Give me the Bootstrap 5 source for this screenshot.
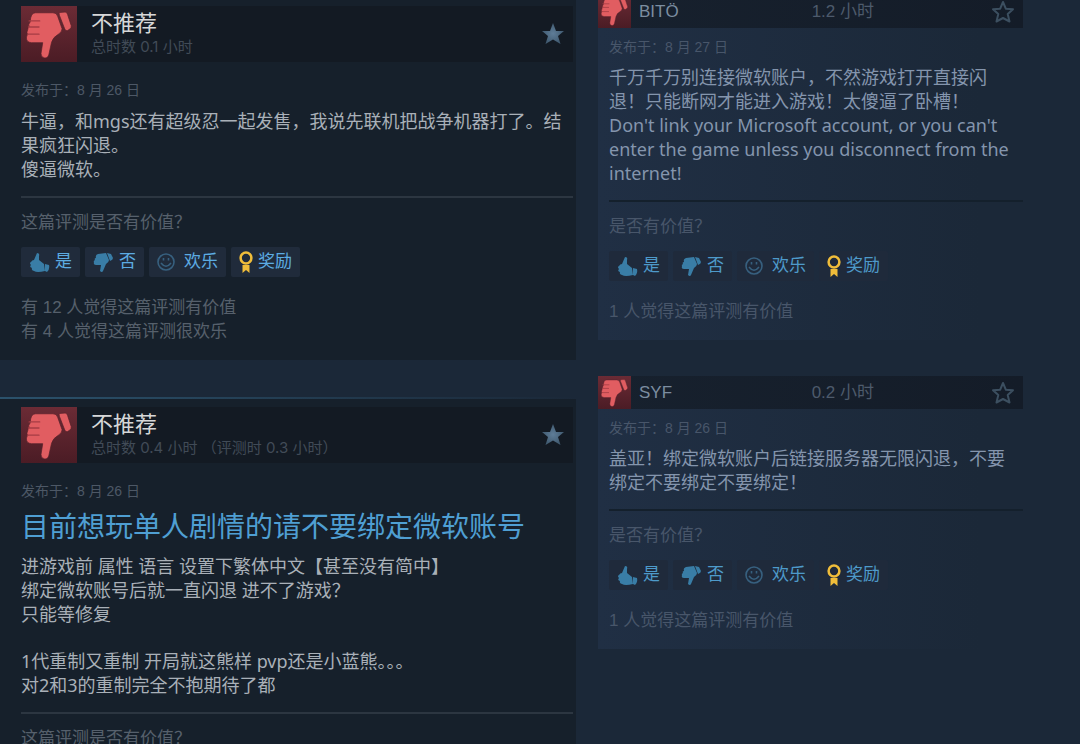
<!DOCTYPE html>
<html lang="zh-CN">
<head>
<meta charset="utf-8">
<meta name="viewport" content="width=device-width, initial-scale=1">
<title>评测</title>
<link href="https://cdn.jsdelivr.net/npm/bootstrap@5.3.0/dist/css/bootstrap.min.css" rel="stylesheet">
<style>
  body {
    background: #1b2838;
    color: #a9b0b8;
    font-family: "Liberation Sans", "Noto Sans CJK SC", sans-serif;
    font-size: 17px;
    line-height: 24px;
    height: 100vh;
    overflow: hidden;
  }
  .reviews {
    display: grid;
    grid-template-columns: minmax(0, 576fr) minmax(0, 425fr);
    column-gap: 22px;
    padding-right: 57px;
    align-items: start;
  }
  .main-col { margin-top: -4px; }
  .side-col { margin-top: -5px; }

  .review-main {
    background: #16202b;
    border-top: 2px solid;
    border-image: linear-gradient(90deg, #2b526c, #1b2838) 1;
    padding: 8px 3px 16px 21px;
    margin-bottom: 37px;
  }
  .main-head { background: #131a23; height: 56px; padding-right: 8px; }
  .main-head .thumb { width: 56px; height: 56px; }
  .verdict-box { padding-left: 14px; }
  .verdict { font-size: 22px; line-height: 26px; color: #d6d7d8; font-weight: 400; }
  .hours-total { font-family: Inter, "Noto Sans CJK SC", sans-serif; font-size: 15px; line-height: 20px; color: #414b57; }

  .posted { font-size: 14px; line-height: 20px; color: #4d5866; }
  .main-body .posted { padding-top: 18px; margin-bottom: 9px; }
  .side-body .posted { padding-top: 9px; margin-bottom: 8px; }
  .headline { font-size: 28px; line-height: 36px; color: #4f9fd3; font-weight: 400; margin-bottom: 8px; white-space: nowrap; }
  .words { font-family: "Noto Sans", "Noto Sans CJK SC", sans-serif; font-size: 18px; line-height: 24px; }
  .words p { margin-bottom: 23px; }
  .words p:last-child { margin-bottom: 0; }
  .rule { height: 2px; margin: 15px 0 13px; border: 0; opacity: 1; background: #2c3641; }
  .prompt { color: #56606c; margin-bottom: 12px; }
  .counts { color: #56606c; margin-top: 18px; }

  .vote {
    --bs-btn-color: #5cabe2;
    --bs-btn-bg: #202b3b;
    --bs-btn-hover-color: #fff;
    --bs-btn-hover-bg: #35506b;
    --bs-btn-border-width: 0;
    --bs-btn-border-radius: 2px;
    --bs-btn-padding-x: 8px;
    --bs-btn-padding-y: 0;
    --bs-btn-font-size: 17px;
    --bs-btn-line-height: 28px;
    height: 30px;
    display: flex;
    align-items: center;
    gap: 5px;
  }
  .votes { gap: 5px; padding-bottom: 1px; }
  .vote svg { width: 21px; height: 21px; flex: none; }
  .vote .face { width: 18px; height: 18px; margin-right: 4px; }
  .vote .medal { width: 14px; height: 22px; }
  .vote.award { --bs-btn-padding-x: 8px; }

  .review-side {
    background: linear-gradient(90deg, #202f44, #1b2838 90%);
    margin-bottom: 36px;
    color: #8495ad;
  }
  .side-head { background: linear-gradient(90deg, #17212e, #141c28); height: 33px; padding-right: 8px; }
  .side-head .thumb { width: 33px; height: 33px; }
  .player { color: #7c8da0; text-decoration: none; }
  .side-hours { font-size: 17px; color: #4d5a6b; margin-right: 117px; }
  .side-body { padding: 0 0 16px 11px; }
  .side-body .words { padding-right: 14px; }
  .side-body .rule { background: #14202c; }
  .side-body .posted, .side-body .prompt, .side-body .counts { color: #48566a; }
  .side-body .vote { --bs-btn-bg: #1f2a3b; --bs-btn-color: #4e9aca; }
  .star-btn { background: none; border: 0; padding: 0; line-height: 0; }
  .star-btn svg { width: 24px; height: 24px; }
</style>
</head>
<body>
<svg width="0" height="0" class="position-absolute" aria-hidden="true">
  <defs>
    <linearGradient id="red" x1="0" y1="0" x2="0" y2="1">
      <stop offset="0" stop-color="#6b2b35"/><stop offset="1" stop-color="#4b1c25"/>
    </linearGradient>
    <radialGradient id="steel"><stop offset="0" stop-color="#5f7d98"/><stop offset="1" stop-color="#405a70"/></radialGradient>
    <symbol id="thumb-tile" viewBox="0 0 165 165">
      <rect width="165" height="165" fill="url(#red)"/>
      <g fill="#e15d61" stroke="#54202a" stroke-width="2">
        <path d="M43 20H94Q105 20 108 30L121 67Q121 77 109 84Q95 91 90 107L82 143Q79 154 70 153Q59 152 59 140L64 108H31Q16 107 16 94Q16 87 20 84Q15 79 20 69Q20 63 24 61Q20 55 27 47Q28 20 43 20Z"/>
        <path d="M114 19L130 18Q135 18 137 24L148 58Q149 64 144 68L136 73Q131 73 129 68L113 27Q111 21 114 19Z"/>
      </g>
      <path d="M24 44H55M22 62H53M20 83H53" stroke="#a53c44" stroke-width="4" stroke-linecap="round" fill="none"/>
    </symbol>
    <symbol id="down" viewBox="0 0 21 21">
      <path fill="#397da6" d="M5 2L13 1L16 8Q16 10 13 12L10 19Q9 21 7 19L8 13L3 13Q0 13 1 10Q0 9 2 8Q1 6 3 6Q2 3 5 2ZM14 1L18 2L20 6Q20 8 17 9Z"/>
    </symbol>
    <symbol id="up" viewBox="0 0 21 21">
      <path fill="#397da6" d="M5 8L8 1Q11 1 10 4L10 8L15 12L16 19Q8 21 5 19Q2 18 3 16Q0 15 2 13Q0 11 2 10Q3 8 5 8ZM16 12L20 13Q21 17 18 20L16 19Z"/>
    </symbol>
    <symbol id="face" viewBox="0 0 18 18">
      <g fill="none" stroke="#37607f" stroke-width="1.6"><circle cx="9" cy="9" r="8"/><path d="M4 10Q9 16.500 14 10" stroke-width="1.500"/><path d="M6.500 5V7.500M11.500 5V7.500"/></g>
    </symbol>
    <symbol id="medal" viewBox="0 0 14 22">
      <circle cx="7" cy="7" r="5.400" fill="none" stroke="#f0bd3a" stroke-width="2.500"/>
      <path d="M3.500 14H10.500V22L7 19L3.500 22Z" fill="#f0bd3a"/>
    </symbol>
    <symbol id="star-full" viewBox="0 0 24 24">
      <path fill="url(#steel)" d="M12 1L15 9L23 9L17 14L19.500 22L12 17.500L4.500 22L7 14L1 9L9 9Z"/>
    </symbol>
    <symbol id="star-line" viewBox="0 0 24 24">
      <path fill="none" stroke="#3c4f60" stroke-width="2" stroke-linejoin="round" d="M12 2L14.800 8.700L22 9.200L16.700 14L18.500 21.500L12 18L5.500 21.500L7.300 14L2 9.200L9.200 8.700Z"/>
    </symbol>
  </defs>
</svg>

<main class="reviews">
  <section class="main-col">
    <article class="review-main">
      <header class="main-head d-flex align-items-center">
        <svg class="thumb flex-shrink-0" aria-hidden="true"><use href="#thumb-tile"/></svg>
        <div class="flex-grow-1 verdict-box">
          <h2 class="verdict mb-0">不推荐</h2>
          <div class="hours-total">总时数 0.1 小时</div>
        </div>
        <svg width="24" height="24" aria-hidden="true"><use href="#star-full"/></svg>
      </header>
      <div class="main-body">
        <div class="posted">发布于：8 月 26 日</div>
        <div class="words"><p>牛逼，和mgs还有超级忍一起发售，我说先联机把战争机器打了。结果疯狂闪退。<br>傻逼微软。</p></div>
        <hr class="rule">
        <div class="prompt">这篇评测是否有价值？</div>
        <div class="votes d-flex">
          <button type="button" class="btn vote"><svg><use href="#up"/></svg>是</button>
          <button type="button" class="btn vote"><svg><use href="#down"/></svg>否</button>
          <button type="button" class="btn vote"><svg class="face"><use href="#face"/></svg>欢乐</button>
          <button type="button" class="btn vote award"><svg class="medal"><use href="#medal"/></svg>奖励</button>
        </div>
        <div class="counts">有 12 人觉得这篇评测有价值<br>有 4 人觉得这篇评测很欢乐</div>
      </div>
    </article>

    <article class="review-main">
      <header class="main-head d-flex align-items-center">
        <svg class="thumb flex-shrink-0" aria-hidden="true"><use href="#thumb-tile"/></svg>
        <div class="flex-grow-1 verdict-box">
          <h2 class="verdict mb-0">不推荐</h2>
          <div class="hours-total">总时数 0.4 小时 （评测时 0.3 小时）</div>
        </div>
        <svg width="24" height="24" aria-hidden="true"><use href="#star-full"/></svg>
      </header>
      <div class="main-body">
        <div class="posted">发布于：8 月 26 日</div>
        <h1 class="headline">目前想玩单人剧情的请不要绑定微软账号</h1>
        <div class="words">
          <p>进游戏前 属性 语言 设置下繁体中文【甚至没有简中】<br>绑定微软账号后就一直闪退 进不了游戏？<br>只能等修复</p>
          <p>1代重制又重制 开局就这熊样 pvp还是小蓝熊。。。<br>对2和3的重制完全不抱期待了都</p>
        </div>
        <hr class="rule">
        <div class="prompt">这篇评测是否有价值？</div>
      </div>
    </article>
  </section>

  <section class="side-col">
    <article class="review-side">
      <header class="side-head d-flex align-items-center">
        <svg class="thumb flex-shrink-0" aria-hidden="true"><use href="#thumb-tile"/></svg>
        <a href="#" class="player flex-grow-1 ps-2">BITÖ</a>
        <span class="side-hours">1.2 小时</span>
        <button type="button" class="star-btn" aria-label="收藏"><svg><use href="#star-line"/></svg></button>
      </header>
      <div class="side-body">
        <div class="posted">发布于：8 月 27 日</div>
        <div class="words"><p>千万千万别连接微软账户，不然游戏打开直接闪退！只能断网才能进入游戏！太傻逼了卧槽！<br>Don't link your Microsoft account, or you can't enter the game unless you disconnect from the internet!</p></div>
        <hr class="rule">
        <div class="prompt">是否有价值？</div>
        <div class="votes d-flex">
          <button type="button" class="btn vote"><svg><use href="#up"/></svg>是</button>
          <button type="button" class="btn vote"><svg><use href="#down"/></svg>否</button>
          <button type="button" class="btn vote"><svg class="face"><use href="#face"/></svg>欢乐</button>
          <button type="button" class="btn vote award"><svg class="medal"><use href="#medal"/></svg>奖励</button>
        </div>
        <div class="counts">1 人觉得这篇评测有价值</div>
      </div>
    </article>

    <article class="review-side">
      <header class="side-head d-flex align-items-center">
        <svg class="thumb flex-shrink-0" aria-hidden="true"><use href="#thumb-tile"/></svg>
        <a href="#" class="player flex-grow-1 ps-2">SYF</a>
        <span class="side-hours">0.2 小时</span>
        <button type="button" class="star-btn" aria-label="收藏"><svg><use href="#star-line"/></svg></button>
      </header>
      <div class="side-body">
        <div class="posted">发布于：8 月 26 日</div>
        <div class="words"><p>盖亚！绑定微软账户后链接服务器无限闪退，不要绑定不要绑定不要绑定！</p></div>
        <hr class="rule">
        <div class="prompt">是否有价值？</div>
        <div class="votes d-flex">
          <button type="button" class="btn vote"><svg><use href="#up"/></svg>是</button>
          <button type="button" class="btn vote"><svg><use href="#down"/></svg>否</button>
          <button type="button" class="btn vote"><svg class="face"><use href="#face"/></svg>欢乐</button>
          <button type="button" class="btn vote award"><svg class="medal"><use href="#medal"/></svg>奖励</button>
        </div>
        <div class="counts">1 人觉得这篇评测有价值</div>
      </div>
    </article>
  </section>
</main>
<script src="https://cdn.jsdelivr.net/npm/bootstrap@5.3.0/dist/js/bootstrap.bundle.min.js"></script>
</body>
</html>
